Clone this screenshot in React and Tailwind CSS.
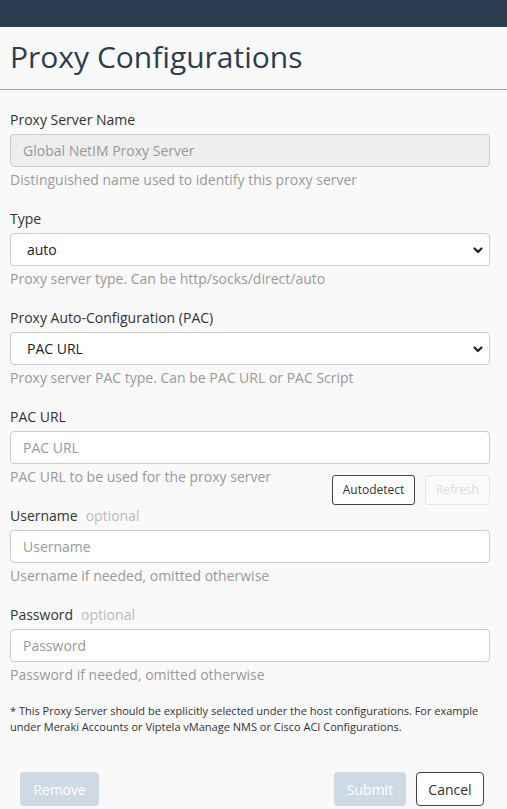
import React, { useState } from 'react';

const font = { fontFamily: '"Open Sans", "Liberation Sans", sans-serif' };

const Chevron = () => (
  <svg width="12" height="12" viewBox="0 0 12 12" className="pointer-events-none">
    <path d="M2.5 4.5 L6 8 L9.5 4.5" fill="none" stroke="#222" strokeWidth="2.2" strokeLinecap="round" strokeLinejoin="round" />
  </svg>
);

const Label = ({ children, optional }) => (
  <div className="text-[14px] leading-[20px] text-[#333] mb-[4px]">
    {children}
    {optional && <span className="ml-[8px] text-[#bbb]">optional</span>}
  </div>
);

const Help = ({ children }) => (
  <div className="text-[14px] leading-[20px] text-[#999] mt-[3px]">{children}</div>
);

const TextInput = ({ placeholder, value, disabled, type = 'text' }) => (
  <input
    type={type}
    placeholder={placeholder}
    defaultValue={value}
    disabled={disabled}
    className={
      'block w-full h-[33px] px-[12px] text-[14px] border border-[#ccc] rounded-[4px] outline-none placeholder:text-[#999] ' +
      (disabled ? 'bg-[#eee] text-[#999]' : 'bg-white text-[#333]')
    }
  />
);

const Select = ({ value, onChange, options }) => (
  <div className="relative">
    <select
      value={value}
      onChange={(e) => onChange(e.target.value)}
      className="block w-full h-[33px] pl-[16px] pr-[30px] text-[14px] text-[#222] bg-white border border-[#ccc] rounded-[4px] appearance-none outline-none"
    >
      {options.map((o) => (
        <option key={o}>{o}</option>
      ))}
    </select>
    <div className="absolute right-[6px] top-0 h-full flex items-center">
      <Chevron />
    </div>
  </div>
);

export default function App() {
  const [type, setType] = useState('auto');
  const [pac, setPac] = useState('PAC URL');

  return (
    <div className="min-h-[809px] bg-[#f9f9f9]" style={font}>
      {/* top bar */}
      <div className="h-[27px] bg-[#2d3d50]" />

      {/* header */}
      <div className="h-[63px] border-b border-[#a6a6a6] flex items-center px-[10px]">
        <h1 className="text-[30px] leading-[40px] text-[#2d3d50] mt-[-2px]">Proxy Configurations</h1>
      </div>

      <div className="px-[10px] pr-[17px] pt-[20px]">
        <div>
          <Label>Proxy Server Name</Label>
          <TextInput value="Global NetIM Proxy Server" disabled />
          <Help>Distinguished name used to identify this proxy server</Help>
        </div>

        <div className="mt-[19px]">
          <Label>Type</Label>
          <Select value={type} onChange={setType} options={['http', 'socks', 'direct', 'auto']} />
          <Help>Proxy server type. Can be http/socks/direct/auto</Help>
        </div>

        <div className="mt-[19px]">
          <Label>Proxy Auto-Configuration (PAC)</Label>
          <Select value={pac} onChange={setPac} options={['PAC URL', 'PAC Script']} />
          <Help>Proxy server PAC type. Can be PAC URL or PAC Script</Help>
        </div>

        <div className="mt-[19px]">
          <Label>PAC URL</Label>
          <TextInput placeholder="PAC URL" />
          <div className="flex items-start justify-between mt-[3px]">
            <div className="text-[14px] leading-[20px] text-[#999]">PAC URL to be used for the proxy server</div>
            <div className="flex gap-[10px] mt-[8px]">
              <button className="h-[30px] w-[83px] text-[12px] text-[#333] bg-white border border-[#444] rounded-[3px]">
                Autodetect
              </button>
              <button disabled className="h-[30px] w-[65px] text-[12px] text-[#dcdcdc] bg-[#fafafa] border border-[#e6e6e6] rounded-[3px]">
                Refresh
              </button>
            </div>
          </div>
        </div>

        <div className="mt-[1px]">
          <Label optional>Username</Label>
          <TextInput placeholder="Username" />
          <Help>Username if needed, omitted otherwise</Help>
        </div>

        <div className="mt-[19px]">
          <Label optional>Password</Label>
          <TextInput placeholder="Password" type="password" />
          <Help>Password if needed, omitted otherwise</Help>
        </div>

        <p className="mt-[18px] text-[11px] leading-[16px] text-[#333]">
          * This Proxy Server should be explicitly selected under the host configurations. For example under Meraki Accounts or Viptela vManage NMS or Cisco ACI Configurations.
        </p>
      </div>

      {/* footer buttons */}
      <div className="flex items-center justify-between pl-[20px] pr-[23px] mt-[37px]">
        <button disabled className="h-[34px] w-[79px] text-[14px] text-white bg-[#cdd9e3] rounded-[4px]">
          Remove
        </button>
        <div className="flex gap-[10px]">
          <button disabled className="h-[34px] w-[72px] text-[14px] text-white bg-[#cdd9e3] rounded-[4px]">
            Submit
          </button>
          <button className="h-[34px] w-[68px] text-[14px] text-[#333] bg-white border border-[#444] rounded-[4px]">
            Cancel
          </button>
        </div>
      </div>
    </div>
  );
}
